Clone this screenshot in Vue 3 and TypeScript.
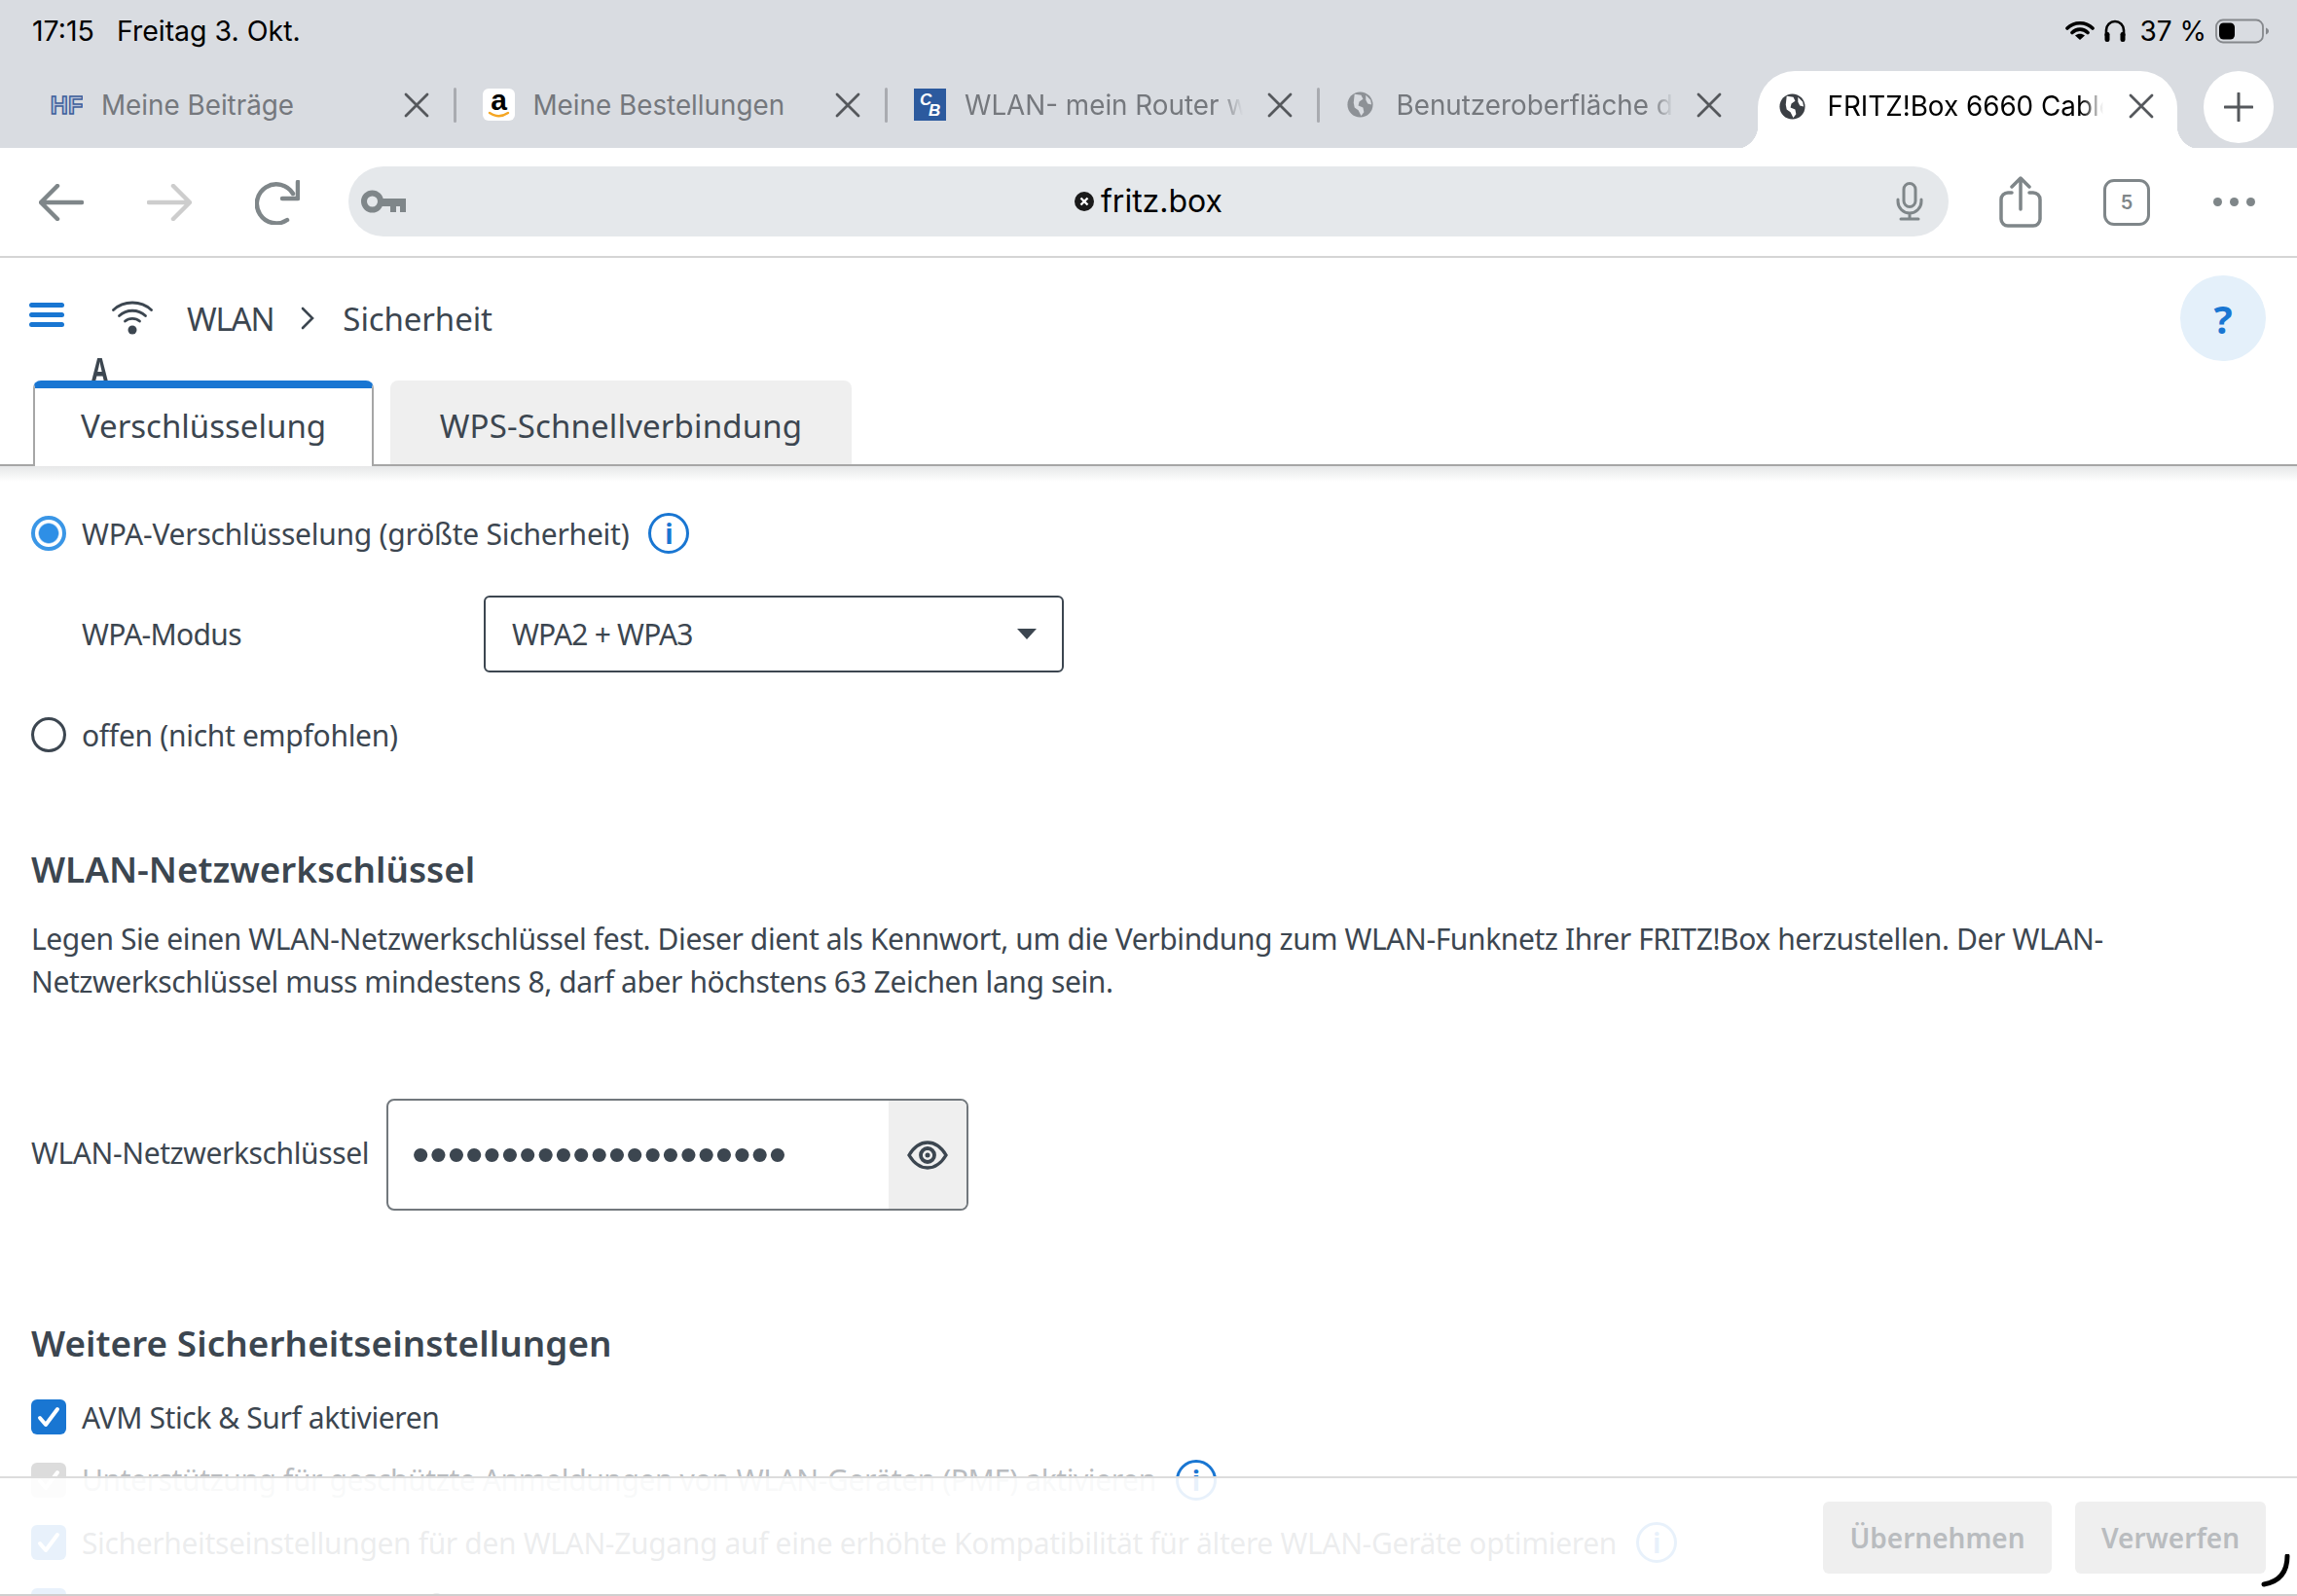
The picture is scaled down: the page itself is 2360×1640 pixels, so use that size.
<script setup lang="ts">
interface Tab { title: string; fav: string; fade?: boolean }
const tabs: Tab[] = [
  { title: 'Meine Beiträge', fav: 'hf' },
  { title: 'Meine Bestellungen', fav: 'amz' },
  { title: 'WLAN- mein Router wird nicht gefunden', fav: 'cb', fade: true },
  { title: 'Benutzeroberfläche der FRITZ!Box', fav: 'globe', fade: true },
]
const dots = '•'.repeat(21)
</script>

<template>
  <div class="app">
    <header class="chrome">
      <div class="status">
        <div class="status-left"><span>17:15</span><span>Freitag 3. Okt.</span></div>
        <div class="status-right">
          <svg width="30" height="22" viewBox="0 0 30 22"><path d="M2 8C9 1 21 1 28 8M7 12.500C11.500 8 18.500 8 23 12.500" fill="none" stroke="#000" stroke-width="3.600" stroke-linecap="round"/><path d="M15 20l-5-4.500c3-2.400 7-2.400 10 0z" fill="#000"/></svg>
          <svg width="24" height="24" viewBox="0 0 24 24"><path d="M3 17v-6a9 9 0 0 1 18 0v6" fill="none" stroke="#000" stroke-width="2.600"/><rect x="1.500" y="13" width="5" height="10" rx="2.200" fill="#000"/><rect x="17.500" y="13" width="5" height="10" rx="2.200" fill="#000"/></svg>
          <span class="pct">37 %</span>
          <svg width="56" height="26" viewBox="0 0 56 26"><rect x="1" y="1.500" width="48" height="23" rx="7" fill="none" stroke="#85888c" stroke-width="1.800"/><rect x="4" y="4.500" width="16" height="17" rx="4.500" fill="#000"/><path d="M52 9.500c2 .8 3 2 3 3.500s-1 2.700-3 3.500z" fill="#85888c"/></svg>
        </div>
      </div>
      <div class="tabstrip">
        <div v-for="t in tabs" :key="t.title" class="btab">
          <svg v-if="t.fav === 'hf'" class="fav" viewBox="0 0 33 26"><text x="16.500" y="22" text-anchor="middle" class="hf">HF</text></svg>
          <svg v-else-if="t.fav === 'amz'" class="fav" viewBox="0 0 33 33"><rect width="33" height="33" rx="6" fill="#fff"/><text x="16.500" y="22" text-anchor="middle" class="amz">a</text><path d="M7 25c6 4 13 4 19 0" fill="none" stroke="#f5a623" stroke-width="2.400" stroke-linecap="round"/></svg>
          <svg v-else-if="t.fav === 'cb'" class="fav" viewBox="0 0 33 33"><rect width="33" height="33" fill="#2c5a9e"/><text x="6" y="17" class="cb">C</text><text x="15" y="28" class="cb">B</text></svg>
          <svg v-else class="fav" viewBox="0 0 30 30"><circle cx="15" cy="15" r="13.500" fill="#8d9196"/><path d="M9 4l7 1 2 4-4 3-1 4 5 2 1 5-3 4-3-6-4-3-1-5zM21 5l5 5 1 5-4-1-2-4z" fill="#d9dce1"/></svg>
          <span class="btab-title" :class="{ fade: t.fade }">{{ t.title }}</span>
          <svg class="x" viewBox="0 0 26 26"><path d="M2 2l22 22M24 2L2 24" stroke="#55585c" stroke-width="2.800" stroke-linecap="round"/></svg>
        </div>
        <div class="btab active">
          <svg class="fav" viewBox="0 0 30 30"><circle cx="15" cy="15" r="13.500" fill="#3b3f44"/><path d="M9 4l7 1 2 4-4 3-1 4 5 2 1 5-3 4-3-6-4-3-1-5zM21 5l5 5 1 5-4-1-2-4z" fill="#fff"/></svg>
          <span class="btab-title fade dark">FRITZ!Box 6660 Cable</span>
          <svg class="x" viewBox="0 0 26 26"><path d="M2 2l22 22M24 2L2 24" stroke="#55585c" stroke-width="2.800" stroke-linecap="round"/></svg>
        </div>
        <div class="newtab">
          <svg width="30" height="30" viewBox="0 0 30 30"><path d="M15 1v28M1 15h28" stroke="#55585c" stroke-width="3" stroke-linecap="round"/></svg>
        </div>
      </div>
      <div class="toolbar">
        <svg class="tool" width="46" height="38" viewBox="0 0 46 38"><path d="M44 19H3M19 2L2 19l17 17" fill="none" stroke="#7f8689" stroke-width="4.500" stroke-linecap="round" stroke-linejoin="round"/></svg>
        <svg class="tool" width="46" height="38" viewBox="0 0 46 38"><path d="M2 19h41M27 2l17 17-17 17" fill="none" stroke="#cdcdcd" stroke-width="4.500" stroke-linecap="round" stroke-linejoin="round"/></svg>
        <svg class="tool" width="46" height="46" viewBox="0 0 46 46"><path d="M33 41A20 20 0 1 1 39 14" fill="none" stroke="#7f8689" stroke-width="4.500" stroke-linecap="round"/><path d="M44 2v17H28" fill="none" stroke="#7f8689" stroke-width="4.500" stroke-linecap="round" stroke-linejoin="round"/></svg>
        <div class="url">
          <svg class="key" width="46" height="24" viewBox="0 0 46 24"><circle cx="11.500" cy="12" r="8.500" fill="none" stroke="#7f8689" stroke-width="6"/><path d="M20 9h26v14h-6v-6h-4v6h-6v-6h-10z" fill="#7f8689"/></svg>
          <div class="url-center">
            <svg width="20" height="20" viewBox="0 0 20 20"><circle cx="10" cy="10" r="10" fill="#1a1a1a"/><path d="M6.500 6.500l7 7M13.500 6.500l-7 7" stroke="#fff" stroke-width="2.400"/></svg>
            <span>fritz.box</span>
          </div>
          <svg class="mic" width="28" height="40" viewBox="0 0 28 40"><rect x="8" y="1.500" width="12" height="24" rx="6" fill="none" stroke="#7f8689" stroke-width="3"/><path d="M2 18v2a12 12 0 0 0 24 0v-2M14 32v6M5 38h18" fill="none" stroke="#7f8689" stroke-width="3" stroke-linecap="round"/></svg>
        </div>
        <svg class="share" width="44" height="54" viewBox="0 0 44 54"><path d="M13 17H9a7 7 0 0 0-7 7v20a7 7 0 0 0 7 7h26a7 7 0 0 0 7-7V24a7 7 0 0 0-7-7h-4" fill="none" stroke="#7f8689" stroke-width="3.500" stroke-linecap="round"/><path d="M22 34V3M13 11l9-9 9 9" fill="none" stroke="#7f8689" stroke-width="3.500" stroke-linecap="round" stroke-linejoin="round"/></svg>
        <div class="count">5</div>
        <div class="more"><i></i><i></i><i></i></div>
      </div>
    </header>

    <div class="page">
      <div class="crumbs">
        <button class="burger"><i></i><i></i><i></i></button>
        <svg class="wifi" width="42" height="36" viewBox="0 0 42 36"><g fill="none" stroke="#3c4650" stroke-width="2.800" stroke-linecap="round"><path d="M1.500 10.500C12 .5 30 .5 40.500 10.500"/><path d="M7.500 16.500C15 9.500 27 9.500 34.500 16.500"/><path d="M13.500 22C17.500 18.500 24.500 18.500 28.500 22"/></g><circle cx="21" cy="31" r="4.500" fill="#3c4650"/></svg>
        <span class="wlan">WLAN</span>
        <svg class="chev" width="14" height="24" viewBox="0 0 14 24"><path d="M2 2l10 10L2 22" fill="none" stroke="#3c4650" stroke-width="2.600" stroke-linecap="round"/></svg>
        <span class="sicher">Sicherheit</span>
        <div class="help">?</div>
        <div class="clipped-a"><span>A</span></div>
      </div>

      <div class="tabs">
        <div class="tab on">Verschlüsselung</div>
        <div class="tab">WPS-Schnellverbindung</div>
      </div>
      <div class="tab-shadow"></div>

      <main class="content">
        <div class="row radio-first">
          <span class="radio checked"></span>
          <span>WPA-Verschlüsselung (größte Sicherheit)</span>
          <span class="info">i</span>
        </div>
        <div class="modus">
          <span class="modus-label">WPA-Modus</span>
          <div class="select"><span>WPA2 + WPA3</span><i class="caret"></i></div>
        </div>
        <div class="row radio-second">
          <span class="radio"></span>
          <span>offen (nicht empfohlen)</span>
        </div>

        <h2 class="h-first">WLAN-Netzwerkschlüssel</h2>
        <p class="desc">Legen Sie einen WLAN-Netzwerkschlüssel fest. Dieser dient als Kennwort, um die Verbindung zum WLAN-Funknetz Ihrer FRITZ!Box herzustellen. Der WLAN-Netzwerkschlüssel muss mindestens 8, darf aber höchstens 63 Zeichen lang sein.</p>

        <div class="pass">
          <span class="pass-label">WLAN-Netzwerkschlüssel</span>
          <div class="pass-box">
            <span class="pass-dots">{{ dots }}</span>
            <div class="eye">
              <svg width="42" height="30" viewBox="0 0 42 30"><path d="M2 15C8 5 14 2 21 2s13 3 19 13c-6 10-12 13-19 13S8 25 2 15z" fill="none" stroke="#3c4650" stroke-width="3.400"/><circle cx="21" cy="15" r="7" fill="none" stroke="#3c4650" stroke-width="3.800"/><circle cx="21" cy="15" r="2.500" fill="#3c4650"/></svg>
            </div>
          </div>
        </div>

        <h2 class="h-second">Weitere Sicherheitseinstellungen</h2>
        <div class="checks">
          <div class="row">
            <span class="check"><svg width="28" height="24" viewBox="0 0 28 24"><path d="M5 13l6 7L23 4" fill="none" stroke="#fff" stroke-width="4" stroke-linecap="round" stroke-linejoin="round"/></svg></span>
            <span>AVM Stick &amp; Surf aktivieren</span>
          </div>
          <div class="row disabled">
            <span class="check grey"><svg width="28" height="24" viewBox="0 0 28 24"><path d="M5 13l6 7L23 4" fill="none" stroke="#fff" stroke-width="4" stroke-linecap="round" stroke-linejoin="round"/></svg></span>
            <span>Unterstützung für geschützte Anmeldungen von WLAN-Geräten (PMF) aktivieren</span>
            <span class="info">i</span>
          </div>
          <div class="row compat">
            <span class="check"><svg width="28" height="24" viewBox="0 0 28 24"><path d="M5 13l6 7L23 4" fill="none" stroke="#fff" stroke-width="4" stroke-linecap="round" stroke-linejoin="round"/></svg></span>
            <span>Sicherheitseinstellungen für den WLAN-Zugang auf eine erhöhte Kompatibilität für ältere WLAN-Geräte optimieren</span>
            <span class="info">i</span>
          </div>
          <div class="row">
            <span class="check"></span>
            <span>Aktive WLAN-Qualitätsprüfung und Optimierung aktivieren</span>
          </div>
        </div>
      </main>
    </div>

    <footer class="footer">
      <button class="fbtn wide">Übernehmen</button>
      <button class="fbtn">Verwerfen</button>
    </footer>
    <svg class="corner" width="30" height="34" viewBox="0 0 30 34"><path d="M27 2C27 18 20 28 3 31" fill="none" stroke="#000" stroke-width="5" stroke-linecap="round"/></svg>
    <div class="bottom-line"></div>
  </div>
</template>

<style>
html, body { margin: 0; background: #fff; }
</style>

<style scoped>
.app { position: relative; width: 2360px; height: 1640px; overflow: hidden; background: #fff; font-family: "Noto Sans", "Liberation Sans", sans-serif; color: #3c4650; font-size: 30px; }
.chrome { font-family: Inter, "Liberation Sans", sans-serif; }
.status { height: 73px; background: #d9dce1; display: flex; justify-content: space-between; align-items: flex-start; padding: 15px 28px 0 33px; box-sizing: border-box; color: #000; font-size: 28.500px; line-height: 34px; }
.status-left { display: flex; gap: 23px; }
.status-right { display: flex; align-items: center; gap: 9px; }
.pct { font-size: 28px; margin: 0 0 0 4px; }

.tabstrip { height: 79px; background: #d9dce1; display: flex; padding-left: 25px; box-sizing: border-box; position: relative; }
.btab { position: relative; width: 443.500px; height: 79px; box-sizing: border-box; padding: 0 28px 0 27px; display: flex; align-items: center; gap: 19px; margin-top: -5px; }
.btab:not(.active)::after { content: ""; position: absolute; right: 0; top: 22px; width: 3px; height: 36px; background: #a9abb0; border-radius: 2px; }
.btab:nth-child(3) .x { margin-left: 6px; }
.btab:nth-child(4) { width: 450px; padding-right: 37px; gap: 23px; }
.btab:nth-child(4) .x { margin-left: 0; }
.btab:nth-child(4)::after { display: none; }
.fav { width: 33px; height: 33px; flex: none; }
.btab:nth-child(4) .fav, .btab.active .fav { width: 29px; height: 29px; }
.hf { font: 900 25px "Liberation Sans", sans-serif; fill: #b8c4da; stroke: #3f5f9c; stroke-width: 1.500px; }
.amz { font: 700 30px "Liberation Sans", sans-serif; fill: #000; }
.cb { font: italic 700 17px "Liberation Sans", sans-serif; fill: #fff; }
.btab-title { flex: 1; min-width: 0; white-space: nowrap; overflow: hidden; font-size: 27.800px; color: #75787d; }
.btab-title.fade { -webkit-mask-image: linear-gradient(to right, #000 92%, transparent 100%); mask-image: linear-gradient(to right, #000 92%, transparent 100%); }
.btab-title.dark { color: #000; }
.x { width: 26px; height: 26px; flex: none; margin: 0 0 0 14px; }
.btab.active { width: 431px; height: 80px; margin-top: 0; background: #fff; border-radius: 38px 38px 0 0; padding: 0 24px 8px 21px; gap: 22px; }
.btab.active .x { margin-left: 4px; }
.btab.active::before, .btab.active::after { content: ""; position: absolute; bottom: 0; width: 24px; height: 24px; }
.btab.active::before { left: -24px; background: radial-gradient(circle at 0 0, transparent 24px, #fff 24.500px); }
.btab.active::after { right: -24px; background: radial-gradient(circle at 100% 0, transparent 24px, #fff 24.500px); }
.newtab { position: absolute; left: 2264px; top: 0; width: 72px; height: 74px; border-radius: 50%; background: #fff; display: flex; align-items: center; justify-content: center; }

.toolbar { height: 113px; box-sizing: border-box; border-bottom: 2px solid #d5d5d5; display: flex; align-items: center; padding: 0 0 0 40px; }
.tool { flex: none; margin-right: 65px; }
.tool:nth-child(3) { margin-right: 50px; }
.url { position: relative; width: 1644px; height: 72px; border-radius: 36px; background: #e5e8eb; display: flex; align-items: center; justify-content: center; margin-top: -2px; }
.key { position: absolute; left: 13px; top: 24px; }
.mic { position: absolute; right: 26px; top: 16px; }
.url-center { display: flex; align-items: center; gap: 7px; font-size: 32px; color: #000; margin-left: 0; }
.share { margin-left: 52px; flex: none; margin-top: 1px; }
.count { width: 48px; height: 48px; box-sizing: border-box; margin-left: 63px; border: 3.500px solid #7f8689; border-radius: 11px; font-size: 20px; font-weight: 600; color: #7f8689; display: flex; align-items: center; justify-content: center; }
.more { display: flex; gap: 8px; margin-left: 65px; }
.more i { width: 9px; height: 9px; border-radius: 50%; background: #7f8689; }

.page { position: relative; }
.crumbs { height: 126px; display: flex; align-items: center; padding: 0 32px 2px 30px; box-sizing: border-box; font-size: 33px; position: relative; }
.burger { width: 36px; height: 25px; padding: 0; border: 0; background: none; display: flex; flex-direction: column; justify-content: space-between; margin: -8px 49px 0 0; }
.burger i { display: block; height: 5px; border-radius: 3px; background: #1976d2; }
.wifi { margin-right: 35px; margin-top: -2px; }
.wlan { letter-spacing: -1.200px; }
.chev { margin: 0 29px 0 28px; }
.sicher { letter-spacing: -0.100px; }
.help { width: 88px; height: 88px; border-radius: 50%; background: #e4f0fa; color: #1976d2; font-weight: 700; font-size: 40px; display: flex; align-items: center; justify-content: center; margin-left: auto; }
.clipped-a { position: absolute; left: 91px; top: 102px; width: 22px; height: 24px; overflow: hidden; font-weight: 700; font-size: 34px; line-height: 24px; }
.clipped-a span { display: block; text-align: center; transform: scaleX(0.72); }

.tabs { display: flex; gap: 17px; padding-left: 34px; height: 88px; border-bottom: 2px solid #a6a6a6; box-sizing: border-box; font-size: 33px; }
.tab { height: 86px; background: #efefef; border-radius: 8px 8px 0 0; display: flex; align-items: center; box-sizing: border-box; }
.tab.on { width: 350px; height: 88px; padding: 0 0 4px; justify-content: center; background: #fff; border: 2px solid #a6a6a6; border-top: 8px solid #1976d2; border-bottom: 0; position: relative; z-index: 1; }
.tab:not(.on) { width: 474px; padding: 6px 0 0; justify-content: center; letter-spacing: 0.150px; }
.tab-shadow { height: 16px; background: linear-gradient(#e6e7e8, #fff); }

.content { padding: 0 32px; margin-top: -16px; letter-spacing: -0.400px; }
.row { display: flex; align-items: center; gap: 16px; height: 44px; white-space: nowrap; }
.radio-first { margin-top: 47px; letter-spacing: -0.240px; }
.radio-second { margin-top: 42px; letter-spacing: -0.300px; }
.compat { letter-spacing: -0.350px; }
.radio { width: 36px; height: 36px; box-sizing: border-box; border-radius: 50%; border: 3px solid #3c4650; flex: none; background: #fff; }
.radio.checked { border: 4px solid #3a96e6; background: radial-gradient(circle, #2e8fe6 9.500px, #fff 11px); }
.info { width: 42px; height: 42px; box-sizing: border-box; border: 3px solid #1976d2; border-radius: 50%; color: #1976d2; display: flex; align-items: center; justify-content: center; font-size: 28px; font-weight: 700; margin-left: 4px; line-height: 1; flex: none; }
.modus { display: flex; align-items: center; margin: 42px 0 0 52px; }
.modus-label { width: 413px; letter-spacing: -0.700px; }
.select { width: 596px; height: 79px; box-sizing: border-box; border: 2px solid #3c4650; border-radius: 6px; display: flex; align-items: center; justify-content: space-between; padding: 0 26px 0 27px; letter-spacing: -0.800px; }
.caret { width: 0; height: 0; border: 10px solid transparent; border-top: 11px solid #3c4650; border-bottom: 0; }
h2 { margin: 0; font-size: 36.800px; font-weight: 600; line-height: 48px; letter-spacing: 0; }
.h-first { margin-top: 92px; }
.h-second { margin-top: 112px; letter-spacing: 0.100px; }
.desc { margin: 26px 0 0; line-height: 44px; width: 2200px; }
.pass { display: flex; align-items: center; margin-top: 98px; }
.pass-label { width: 365px; white-space: nowrap; margin-top: -5px; }
.pass-box { width: 598px; height: 115px; box-sizing: border-box; border: 2px solid #72787d; border-radius: 8px; display: flex; align-items: stretch; overflow: hidden; }
.pass-dots { flex: 1; display: flex; align-items: center; padding-left: 24px; font-size: 52.400px; line-height: 1; letter-spacing: 0; font-family: "Liberation Sans", sans-serif; }
.eye { width: 80px; background: #efefef; display: flex; align-items: center; justify-content: center; }
.checks { margin-top: 30px; display: flex; flex-direction: column; gap: 20.500px; }
.check { width: 36px; height: 36px; border-radius: 6px; background: #1976d2; flex: none; display: flex; align-items: center; justify-content: center; }
.check.grey { background: #dcdcdc; }
.disabled { color: #b9bcc0; }

.footer { position: absolute; left: 0; right: 0; top: 1517px; bottom: 0; background: rgba(255, 255, 255, 0.9); border-top: 2px solid #dcdcdc; display: flex; justify-content: flex-end; align-items: flex-start; gap: 24px; padding: 24px 32px 0 0; box-sizing: border-box; }
.fbtn { height: 74px; width: 196px; border: 0; border-radius: 6px; background: #efefef; color: #b9bcbf; font: 600 28px "Noto Sans", sans-serif; padding: 0; }
.fbtn.wide { width: 235px; }
.corner { position: absolute; left: 2323px; top: 1597px; }
.bottom-line { position: absolute; left: 0; right: 0; bottom: 0; height: 2px; background: #cfcfcf; }
</style>
